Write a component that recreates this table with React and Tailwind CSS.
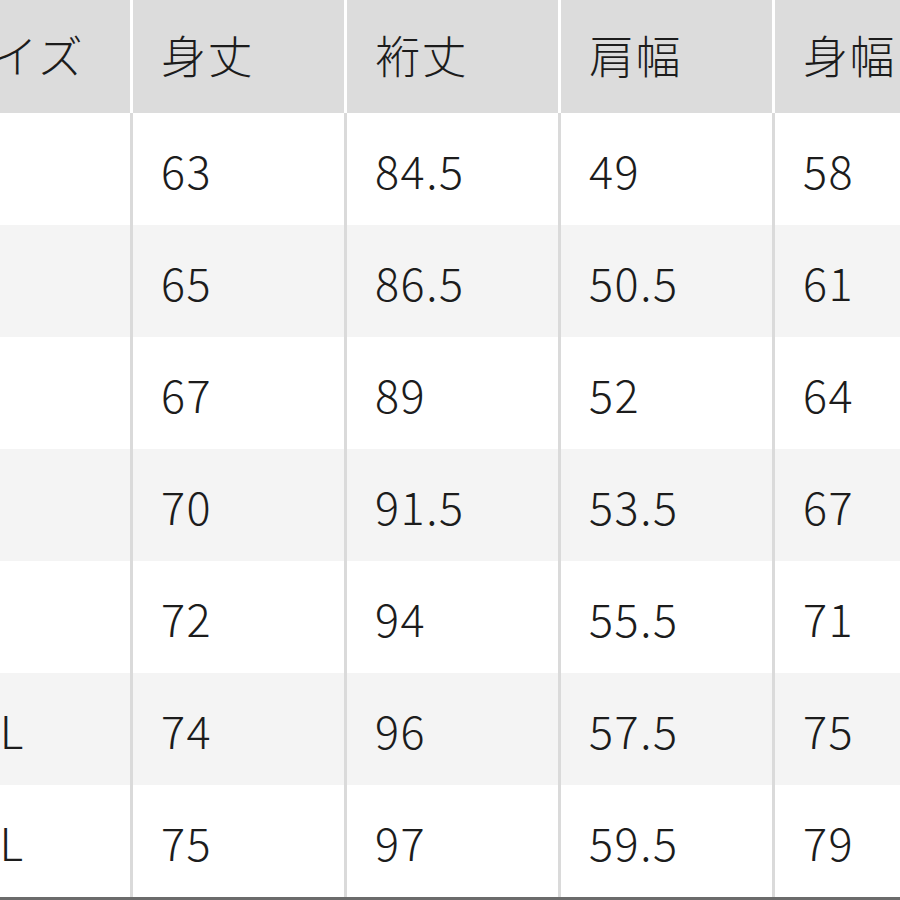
import React from 'react';

const headers = ['サイズ', '身丈', '裄丈', '肩幅', '身幅'];

const rows = [
  ['XS', '63', '84.5', '49', '58'],
  ['S', '65', '86.5', '50.5', '61'],
  ['M', '67', '89', '52', '64'],
  ['L', '70', '91.5', '53.5', '67'],
  ['XL', '72', '94', '55.5', '71'],
  ['XXL', '74', '96', '57.5', '75'],
  ['3XL', '75', '97', '59.5', '79'],
];

const font = { fontFamily: '"Noto Sans CJK JP", "Noto Sans", sans-serif' };

export default function App() {
  return (
    <div className="w-[900px] h-[900px] overflow-hidden bg-white text-[#1c1c1c] font-light" style={font}>
      <div className="ml-[-84px] w-[1100px]">
        {/* Header */}
        <div className="flex h-[113px] bg-[#dcdcdc]">
          {headers.map((h, i) => (
            <div
              key={h}
              className={`flex items-center pb-[4px] text-[45px] tracking-[1.5px] border-r-[3px] border-white ${
                i === 0 ? 'w-[217px] pl-[30px]' : 'w-[214px] pl-[28px]'
              }`}
            >
              {h}
            </div>
          ))}
        </div>

        {/* Body */}
        {rows.map((row, r) => (
          <div
            key={row[0]}
            className={`flex h-[112px] ${r % 2 === 1 ? 'bg-[#f4f4f4]' : 'bg-white'}`}
          >
            {row.map((cell, i) => (
              <div
                key={i}
                className={`flex items-center pt-[2px] text-[45px] tracking-[1.5px] border-r-[3px] border-[#dadada] ${
                  i === 0 ? 'w-[217px] pl-[32px]' : 'w-[214px] pl-[28px]'
                }`}
              >
                {cell}
              </div>
            ))}
          </div>
        ))}

        <div className="h-[3px] bg-[#6b6b6b]" />
      </div>
    </div>
  );
}
